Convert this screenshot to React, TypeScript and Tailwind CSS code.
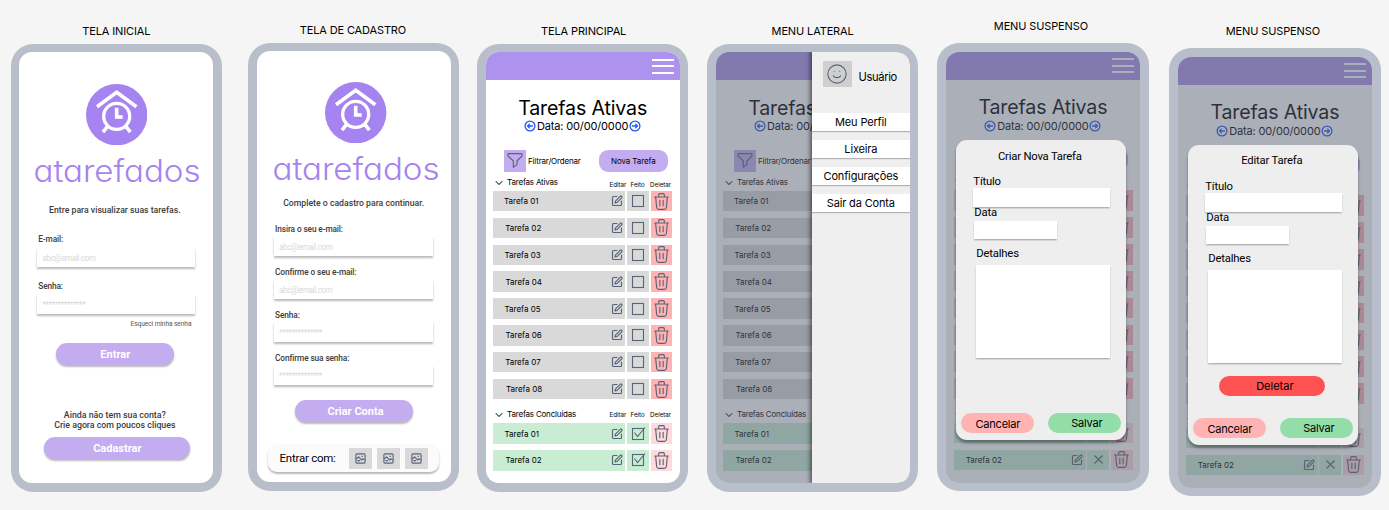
import React from "react";
import { SquarePen, Smile, ChevronDown, X } from "lucide-react";

type Children = { children?: React.ReactNode; className?: string };

const INTER = "font-['Inter',sans-serif]";
const ROBOTO = "font-['Roboto',sans-serif]";

function Phone({ title, titleClass, className, screenClass, children }: Children & { title: string; titleClass: string; screenClass: string }) {
  return (
    <section className={`flex w-[211.3px] shrink-0 flex-col ${className}`}>
      <h2 className={`h-[14px] shrink-0 whitespace-nowrap text-center font-['Inter',sans-serif] text-[11px] leading-[14px] tracking-[-0.13px] text-black ${titleClass}`}>{title}</h2>
      <div className="h-[448.4px] rounded-[22px] bg-[#b9bfca] p-[8.6px]">
        <div className={`relative flex h-full flex-col overflow-hidden rounded-[13px] ${screenClass}`}>{children}</div>
      </div>
    </section>
  );
}

function Logo() {
  return (
    <svg viewBox="258 223 184 184" className="mx-auto h-[61.4px] w-[61.4px] shrink-0" fill="none" stroke="#fff">
      <circle cx="350" cy="315" r="92" fill="#a583f0" stroke="none" />
      <path d="M291 291 350 248 409 291" strokeWidth="11" />
      <circle cx="350" cy="320" r="39" strokeWidth="10" />
      <path d="M350 294V322H368" strokeWidth="11" />
      <path d="M322 351 309 367M378 351 391 367" strokeWidth="11" />
    </svg>
  );
}

function Wordmark({ className }: Children) {
  return (
    <div className={`flex h-[30px] shrink-0 items-center justify-center whitespace-nowrap font-['Inter',sans-serif] text-[30.5px] font-light leading-[30px] text-[#a583f0] [font-feature-settings:'cv11'] ${className}`}>
      <span className="translate-y-[2px] scale-x-[1.085]">atarefados</span>
    </div>
  );
}

function Field({ label, hint, gap, className }: { label: string; hint: string; gap: string; className: string }) {
  return (
    <div className={`shrink-0 ${ROBOTO} ${className}`}>
      <label className="block h-[10px] whitespace-nowrap pl-[1px] pt-[0.8px] text-[8.300px] font-medium leading-[10px] tracking-[-0.12px] text-[#3c3c3c]">{label}</label>
      <div className={`flex h-[20px] items-center bg-white pl-[5px] pt-[1.500px] text-[8.200px] leading-none tracking-[-0.45px] text-[#d9d9d9] shadow-[0_2px_2px_rgba(0,0,0,0.28)] ${gap}`}>{hint}</div>
    </div>
  );
}

function PillButton({ children, className }: Children) {
  return (
    <button className={`block h-[22px] shrink-0 rounded-full bg-[#c3adf0] pt-[1px] text-center font-['Roboto',sans-serif] text-[11px] font-bold leading-[21px] text-white shadow-[0_2px_2px_rgba(0,0,0,0.28)] ${className}`}>
      {children}
    </button>
  );
}

function PictureIcon() {
  return (
    <svg viewBox="0 0 11 11" className="h-[11px] w-[11px]" fill="none" stroke="#5a6478" strokeWidth="1.1" strokeLinejoin="round">
      <rect x="0.9" y="0.9" width="9.2" height="9.2" rx="1" />
      <path d="M1 6 3.6 3.8 6.6 7 8 5.7 10 7.4M2.4 7.6H5" />
      <path d="M6.6 3.4H7.8" />
    </svg>
  );
}

function TrashIcon() {
  return (
    <svg viewBox="551 548 45 51" className="h-[17px] w-[15px]" fill="none" stroke="#5a6478" strokeWidth="3.4" strokeLinecap="round" strokeLinejoin="round">
      <path d="M553 560H594M565 559V553Q565 550 568 550H579Q582 550 582 553V559M556 561 559 592Q560 597 565 597H582Q587 597 588 592L591 561M568.500 570V586M578.500 570V586" />
    </svg>
  );
}

function FilterIcon() {
  return (
    <svg viewBox="112 431 48 46" className="h-[15.300px] w-[16px]" fill="none" stroke="#5a6478" strokeWidth="3.4" strokeLinejoin="round">
      <path d="M115 433H157V440L142 455V466L131 474V455L115 440Z" />
    </svg>
  );
}

function ArrowIcon({ flip }: { flip?: boolean }) {
  return (
    <svg viewBox="0 0 12 12" className={`h-[12px] w-[12px] ${flip ? "rotate-180" : ""}`} fill="none" stroke="#1f57f5" strokeWidth="1.3" strokeLinecap="round" strokeLinejoin="round">
      <circle cx="6" cy="6" r="4.900" />
      <path d="M3.500 6H8.500M6.600 4.100 8.500 6 6.600 7.900" />
    </svg>
  );
}

function StatusBox({ mark }: { mark: "empty" | "check" | "cross" }) {
  if (mark === "cross") return <X className="h-[15px] w-[15px] text-[#5a6478]" strokeWidth={1.7} />;
  return (
    <svg viewBox="0 0 16 14" className="h-[14px] w-[16px]" fill="none" stroke="#5a6478" strokeWidth="1.1">
      <rect x="2.500" y="1.500" width="11" height="11" />
      {mark === "check" && <path d="M4.500 5.500 7.500 9.500 15 0.500" />}
    </svg>
  );
}

function SectionHeader({ label, className, columnClass, bare }: { label: string; className: string; columnClass: string; bare?: boolean }) {
  return (
    <div className={`flex h-[10px] shrink-0 whitespace-nowrap pl-[8px] leading-[10px] ${INTER} ${className}`}>
      <ChevronDown className="-ml-px h-[12px] w-[12px] shrink-0 text-[#5a6478]" strokeWidth={2.2} />
      {!bare && (
        <>
          <span className="w-[105px] pl-[2.500px] text-[8px] tracking-[-0.2px]">{label}</span>
          <span className={`w-[21px] text-[6.200px] ${columnClass}`}>Editar</span>
          <span className={`w-[19.500px] text-[6.200px] ${columnClass}`}>Feito</span>
          <span className={`text-[6.200px] ${columnClass}`}>Deletar</span>
        </>
      )}
    </div>
  );
}

function TaskRow({ name, indent, mark, done }: { name?: string; indent: string; mark: "empty" | "check" | "cross"; done?: boolean }) {
  const cell = done ? "bg-[#c8edd3]" : "bg-[#d9d9d9]";
  return (
    <div className="flex h-[20.500px] shrink-0 gap-[1.800px] pl-[7.900px]">
      <div className={`flex w-[131.800px] items-center pr-[2.500px] ${cell} ${indent}`}>
        {name && <span className={`text-[8px] leading-none ${INTER}`}>{name}</span>}
        <SquarePen className="ml-auto h-[12px] w-[12px] text-[#5a6478]" strokeWidth={2.3} />
      </div>
      <div className={`flex w-[21.700px] items-center justify-center ${cell}`}>
        <StatusBox mark={mark} />
      </div>
      <div className={`flex w-[21.700px] items-center justify-center ${done ? "bg-[#ffd9db]" : "bg-[#ffb3b3]"}`}>
        <TrashIcon />
      </div>
    </div>
  );
}

const activeTasks = [
  { name: "Tarefa 01", indent: "pl-[10.500px]" },
  { name: "Tarefa 02", indent: "pl-[11.700px]" },
  { name: "Tarefa 03", indent: "pl-[11px]" },
  { name: "Tarefa 04", indent: "pl-[12px]" },
  { name: "Tarefa 05", indent: "pl-[11px]" },
  { name: "Tarefa 06", indent: "pl-[12px]" },
  { name: "Tarefa 07", indent: "pl-[11.700px]" },
  { name: "Tarefa 08", indent: "pl-[12.500px]" },
];

/* With `backdrop` the list sits behind a dialog, so only the last row is labelled. */
function MainScreen({ backdrop }: { backdrop?: boolean }) {
  const mark = backdrop ? "cross" : "check";
  return (
    <>
      <header className="flex h-[28px] shrink-0 flex-col items-end justify-center gap-[4.500px] bg-[#ad93ed] pr-[6px]">
        <span className="h-[2px] w-[22px] bg-white" />
        <span className="h-[2px] w-[22px] bg-white" />
        <span className="h-[2px] w-[22px] bg-white" />
      </header>
      <h1 className={`mt-[15.500px] h-[24px] shrink-0 whitespace-nowrap text-center text-[19.600px] leading-[24px] tracking-[-0.15px] ${INTER}`}>Tarefas Ativas</h1>
      <div className={`mt-[0.500px] flex h-[12px] shrink-0 items-center justify-center whitespace-nowrap text-[11px] leading-none ${INTER}`}>
        <ArrowIcon flip />
        <span className="w-[93px] pt-[1px] text-center tracking-[-0.15px]">Data: 00/00/0000</span>
        <ArrowIcon />
      </div>
      <div className={`mt-[17.800px] flex h-[22px] shrink-0 items-center whitespace-nowrap pl-[18.500px] text-[8px] leading-none tracking-[-0.18px] ${INTER}`}>
        <div className="flex h-[22px] w-[22px] items-center justify-center bg-[#c3adf0]">
          <FilterIcon />
        </div>
        <span className="w-[72.500px] pl-[2px] pt-[1px]">{!backdrop && "Filtrar/Ordenar"}</span>
        <button className="h-[22px] w-[69.500px] rounded-[9px] bg-[#c3adf0] tracking-[-0.12px]">{!backdrop && "Nova Tarefa"}</button>
      </div>
      <SectionHeader label="Tarefas Ativas" className="mt-[5px]" columnClass="pt-[3.400px]" bare={backdrop} />
      <div className="mt-[4px] flex shrink-0 flex-col gap-[6.350px]">
        {activeTasks.map((t) => (
          <TaskRow key={t.name} name={backdrop ? undefined : t.name} indent={t.indent} mark="empty" />
        ))}
      </div>
      <SectionHeader label="Tarefas Concluídas" className="mt-[10px]" columnClass="pt-[1px]" bare={backdrop} />
      <div className="mt-[4px] flex shrink-0 flex-col gap-[6.350px]">
        <TaskRow name={backdrop ? undefined : "Tarefa 01"} indent="pl-[11px]" mark={mark} done />
        <TaskRow name="Tarefa 02" indent="pl-[12px]" mark={mark} done />
      </div>
    </>
  );
}

function Scrim({ children, className }: Children) {
  return <div className={`absolute inset-0 bg-[#575f71]/50 ${className ?? ""}`}>{children}</div>;
}

function Drawer() {
  const items = [
    { label: "Meu Perfil", className: "mt-[26px] pt-[1.500px]" },
    { label: "Lixeira", className: "mt-[9px]" },
    { label: "Configurações", className: "mt-[8.500px] pt-[1.500px]" },
    { label: "Sair da Conta", className: "mt-[8.500px] pt-[2px]" },
  ];
  return (
    <aside className={`ml-auto flex h-full w-[97.700px] flex-col bg-[#efefef] text-black shadow-[-1px_0_4px_1px_rgba(0,0,0,0.5)] ${INTER}`}>
      <div className="mt-[9px] flex h-[26px] shrink-0 pl-[11px]">
        <div className="flex h-[25.500px] w-[29px] items-center justify-center bg-[#cfcfcf]">
          <Smile className="h-[22px] w-[22px] text-[#5a6478]" strokeWidth={1.2} />
        </div>
        <span className="pl-[6.500px] pt-[8.500px] text-[11.200px] leading-[14px] tracking-[-0.35px]">Usuário</span>
      </div>
      {items.map((item) => (
        <div key={item.label} className={`flex h-[18.200px] shrink-0 items-center justify-center whitespace-nowrap bg-white text-[11px] leading-none tracking-[-0.15px] shadow-[0_1px_1px_rgba(0,0,0,0.25)] ${item.className}`}>
          {item.label}
        </div>
      ))}
    </aside>
  );
}

function TaskDialog({ title, titleClass, deletable }: { title: string; titleClass: string; deletable?: boolean }) {
  const input = "shrink-0 bg-white shadow-[0_1.500px_1.500px_rgba(0,0,0,0.25)]";
  const label = "shrink-0 whitespace-nowrap leading-[12px]";
  return (
    <div className={`ml-[10.500px] mt-[88px] flex h-[300px] w-[170px] flex-col rounded-[11px] bg-[#eee] text-[11.300px] tracking-[-0.2px] text-black shadow-[0_3px_3px_rgba(0,0,0,0.35)] ${ROBOTO}`}>
      <h3 className={`h-[12px] shrink-0 whitespace-nowrap text-center leading-[12px] ${titleClass}`}>{title}</h3>
      <span className={`h-[12px] pl-[17px] ${label} ${deletable ? "mt-[14.500px]" : "mt-[13.500px]"}`}>Título</span>
      <div className={`ml-[17px] h-[19px] w-[137px] ${input}`} />
      <span className={`h-[13.500px] pl-[18px] ${label}`}>Data</span>
      <div className={`ml-[18px] h-[18px] w-[83px] ${input}`} />
      <span className={`mt-[9px] h-[17px] pl-[20px] ${label}`}>Detalhes</span>
      <div className={`ml-[19.500px] h-[93.500px] w-[134.500px] ${input}`} />
      <div className={`mt-[13px] flex h-[20px] shrink-0 pl-[31px] ${INTER}`}>
        {deletable && <button className="h-[20px] w-[106px] rounded-full bg-[#ff5252] pl-[5px] pt-[1.500px] text-[11px] leading-none tracking-normal">Deletar</button>}
      </div>
      <div className={`mt-[22px] flex h-[20px] shrink-0 gap-[14px] pl-[5px] text-[11px] leading-none tracking-[-0.2px] ${INTER}`}>
        <button className="h-[20px] w-[73px] rounded-full bg-[#ffb3b3] pt-[2px]">Cancelar</button>
        <button className="h-[20px] w-[73px] rounded-full bg-[#93dda9] pl-[4px]">Salvar</button>
      </div>
    </div>
  );
}

export default function App() {
  return (
    <main className="flex h-[510px] w-[1389px] items-start overflow-hidden bg-[#f5f5f5]">
      <Phone title="TELA INICIAL" titleClass="mb-[6px]" className="ml-[10.700px] pt-[23.500px]" screenClass="bg-white">
        <div className="mt-[31.500px] flex shrink-0"><Logo /></div>
        <Wordmark className="mt-[9.500px] pl-px" />
        <p className={`mt-[20.500px] h-[10px] shrink-0 whitespace-nowrap pr-[3px] text-center text-[8.700px] font-medium leading-[10px] text-[#3c3c3c] ${ROBOTO}`}>Entre para visualizar suas tarefas.</p>
        <Field label="E-mail:" hint="abc@email.com" gap="mt-[3.500px]" className="ml-[18px] mt-[18.500px] w-[158px]" />
        <Field label="Senha:" hint="**************" gap="mt-[4px]" className="ml-[18px] mt-[13px] w-[158px]" />
        <p className={`mt-[6px] h-[8px] shrink-0 pr-[22px] text-right text-[6.600px] leading-[8px] tracking-[-0.08px] text-[#555] ${ROBOTO}`}>Esqueci minha senha</p>
        <PillButton className="ml-[37px] mt-[15.500px] w-[118px]">Entrar</PillButton>
        <p className={`mt-[44.500px] h-[20px] shrink-0 whitespace-nowrap pr-[3px] text-center text-[8.800px] font-medium leading-[10px] text-[#3c3c3c] ${ROBOTO}`}>
          Ainda não tem sua conta?<br />Crie agora com poucos cliques
        </p>
        <PillButton className="ml-[25px] mt-[7px] w-[146px]">Cadastrar</PillButton>
      </Phone>

      <Phone title="TELA DE CADASTRO" titleClass="mb-[6px] pr-[1.500px]" className="ml-[26px] pt-[22.500px]" screenClass="bg-white">
        <div className="mt-[30.500px] flex shrink-0 pl-[5px]"><Logo /></div>
        <Wordmark className="mt-[9.500px] pl-[5px]" />
        <p className={`mt-[15.500px] h-[10px] shrink-0 whitespace-nowrap text-center text-[8.700px] font-medium leading-[10px] text-[#3c3c3c] ${ROBOTO}`}>Complete o cadastro para continuar.</p>
        <Field label="Insira o seu e-mail:" hint="abc@email.com" gap="mt-[3px]" className="ml-[17.500px] mt-[15px] w-[158.500px]" />
        <Field label="Confirme o seu e-mail:" hint="abc@email.com" gap="mt-[3px]" className="ml-[17.500px] mt-[10.100px] w-[158.500px]" />
        <Field label="Senha:" hint="**************" gap="mt-[3px]" className="ml-[17.500px] mt-[10.100px] w-[158.500px]" />
        <Field label="Confirme sua senha:" hint="**************" gap="mt-[3px]" className="ml-[17.500px] mt-[10.100px] w-[158.500px]" />
        <PillButton className="ml-[38px] mt-[15px] w-[118px] pl-[4px]">Criar Conta</PillButton>
        <div className={`ml-[11.500px] mt-[22px] flex h-[27.500px] w-[171px] shrink-0 items-center rounded-[9px] bg-[#fbfbfb] pl-[11.500px] pt-[1px] text-[11.500px] leading-none tracking-[-0.25px] shadow-[0_2px_2px_rgba(0,0,0,0.28)] ${ROBOTO}`}>
          <span className="w-[69.500px] whitespace-nowrap">Entrar com:</span>
          <div className="flex h-[21.500px] gap-[5.300px]">
            <span className="flex w-[22.700px] items-center justify-center bg-[#d9d9d9]"><PictureIcon /></span>
            <span className="flex w-[22.700px] items-center justify-center bg-[#d9d9d9]"><PictureIcon /></span>
            <span className="flex w-[22.700px] items-center justify-center bg-[#d9d9d9]"><PictureIcon /></span>
          </div>
        </div>
      </Phone>

      <Phone title="TELA PRINCIPAL" titleClass="mb-[6px] pl-[2px]" className="ml-[17.700px] pt-[23.500px]" screenClass="bg-white">
        <MainScreen />
      </Phone>

      <Phone title="MENU LATERAL" titleClass="mb-[6px]" className="ml-[18.700px] pt-[23.500px]" screenClass="bg-white">
        <MainScreen />
        <Scrim><Drawer /></Scrim>
      </Phone>

      <Phone title="MENU SUSPENSO" titleClass="mb-[10px] pr-[4px]" className="ml-[19px] pt-[19px]" screenClass="bg-white">
        <MainScreen backdrop />
        <Scrim className="flex items-start"><TaskDialog title="Criar Nova Tarefa" titleClass="mt-[11px] pr-[3px]" /></Scrim>
      </Phone>

      <Phone title="MENU SUSPENSO" titleClass="mb-[10.500px] pr-[4px]" className="ml-[20.700px] pt-[23.500px]" screenClass="bg-white">
        <MainScreen backdrop />
        <Scrim className="flex items-start"><TaskDialog title="Editar Tarefa" titleClass="mt-[10px] pr-[3px]" deletable /></Scrim>
      </Phone>
    </main>
  );
}
